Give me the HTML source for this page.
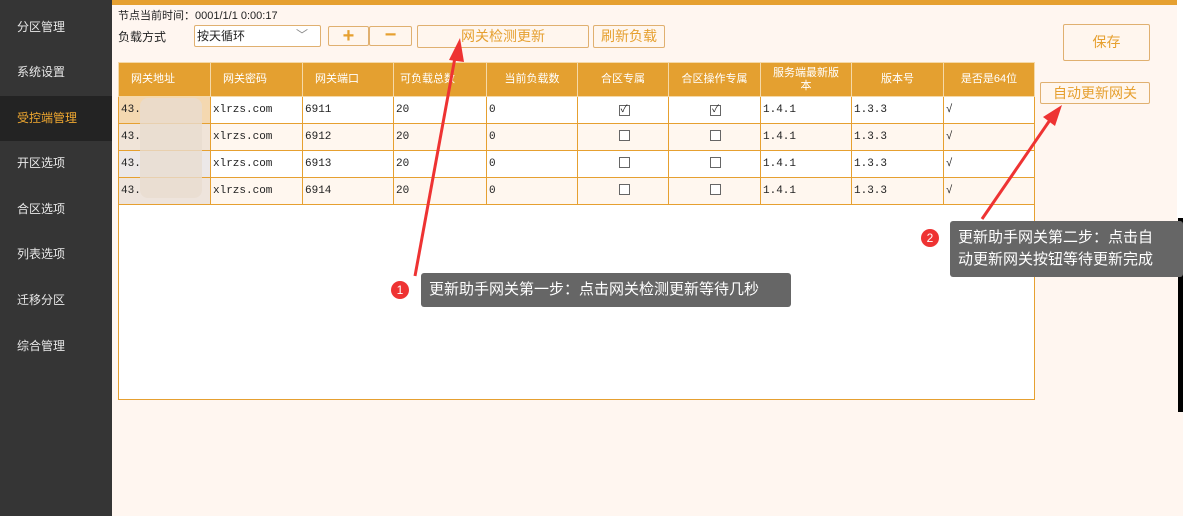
<!DOCTYPE html>
<html><head><meta charset="utf-8"><style>
*{margin:0;padding:0;box-sizing:border-box}
body{width:1183px;height:516px;overflow:hidden;background:#fff6f0;font-family:"Liberation Sans","Noto Sans CJK SC",sans-serif;font-size:12px;position:relative;color:#222}
.abs{position:absolute}
#side{left:0;top:0;width:112px;height:516px;background:#353535}
#side div{position:absolute;left:0;width:112px;height:45px;line-height:45px;padding-left:17px;color:#e8e8e8;font-size:12px}
#side .act{background:#232323;color:#f0a830}
.topbar{left:112px;top:0;width:1066px;height:5px;background:#e6a030}
.btn{position:absolute;border:1px solid #e0b070;border-radius:2px;background:#fff6ee;color:#e6a030;text-align:center}
table{position:absolute;left:118px;top:62px;border-collapse:collapse;table-layout:fixed}
th{background:#e4a030;color:#fff;font-weight:normal;font-size:11px;height:34px;border:1px solid #f5d9a8;line-height:13px}
td{height:27px;border:1px solid #e6a030;font-size:11px;padding-left:2px;font-family:"Liberation Mono","Noto Sans CJK SC",monospace;background:#fff}
tr.alt td{background:#fff7ef}
.cb{display:inline-block;width:11px;height:11px;border:1px solid #666;background:#fff;font-size:10px;line-height:9px;text-align:center}
.tip{position:absolute;background:#666;color:#fff;font-size:15px;border-radius:3px;padding:0 8px}
.badge{position:absolute;width:18px;height:18px;border-radius:50%;background:#ee3333;color:#fff;font-size:12px;text-align:center;line-height:18px}
</style></head><body>
<div id="side" class="abs">
<div style="top:5px">分区管理</div>
<div style="top:50px">系统设置</div>
<div class="act" style="top:96px">受控端管理</div>
<div style="top:141px">开区选项</div>
<div style="top:187px">合区选项</div>
<div style="top:232px">列表选项</div>
<div style="top:278px">迁移分区</div>
<div style="top:324px">综合管理</div>
</div>
<div class="abs topbar"></div>
<div class="abs" style="left:1178px;top:218px;width:5px;height:194px;background:#000"></div>
<div class="abs" style="left:1177px;top:0;width:6px;height:218px;background:#fff"></div>
<div class="abs" style="left:118px;top:7px;font-size:11px">节点当前时间：0001/1/1 0:00:17</div>
<div class="abs" style="left:118px;top:28px;font-size:12px">负载方式</div>
<div class="abs" style="left:194px;top:25px;width:127px;height:22px;border:1px solid #e0b070;border-radius:2px;background:#fff;padding-left:2px;line-height:20px">按天循环<span style="position:absolute;right:12px;top:-1px;color:#888">﹀</span></div>
<div class="btn" style="left:328px;top:26px;width:41px;height:20px;line-height:18px;font-size:20px;font-weight:bold">+</div>
<div class="btn" style="left:369px;top:26px;width:43px;height:20px;line-height:17px;font-size:20px;font-weight:bold">−</div>
<div class="btn" style="left:417px;top:25px;width:172px;height:23px;line-height:21px;font-size:14px">网关检测更新</div>
<div class="btn" style="left:593px;top:25px;width:72px;height:23px;line-height:21px;font-size:14px">刷新负载</div>
<div class="btn" style="left:1063px;top:24px;width:87px;height:37px;line-height:35px;font-size:14px">保存</div>
<div class="btn" style="left:1040px;top:82px;width:110px;height:22px;line-height:20px;font-size:14px">自动更新网关</div>
<div class="abs" style="left:118px;top:62px;width:917px;height:338px;border:1px solid #e6a030;background:#fff"></div>
<table>
<colgroup><col style="width:92px"><col style="width:92px"><col style="width:91px"><col style="width:93px"><col style="width:91px"><col style="width:91px"><col style="width:92px"><col style="width:91px"><col style="width:92px"><col style="width:91px"></colgroup>
<tr><th style="text-align:left;padding-left:12px">网关地址</th><th style="text-align:left;padding-left:12px">网关密码</th><th style="text-align:left;padding-left:12px">网关端口</th><th style="text-align:left;padding-left:6px">可负载总数</th><th>当前负载数</th><th>合区专属</th><th>合区操作专属</th><th>服务端最新版<br>本</th><th>版本号</th><th>是否是64位</th></tr>
<tr><td style="background:#f4d8b0">43.</td><td>xlrzs.com</td><td>6911</td><td>20</td><td>0</td><td style="text-align:center"><span class="cb">✓</span></td><td style="text-align:center"><span class="cb">✓</span></td><td>1.4.1</td><td>1.3.3</td><td>√</td></tr>
<tr class="alt"><td style="background:#f0e4d8">43.</td><td>xlrzs.com</td><td>6912</td><td>20</td><td>0</td><td style="text-align:center"><span class="cb"></span></td><td style="text-align:center"><span class="cb"></span></td><td>1.4.1</td><td>1.3.3</td><td>√</td></tr>
<tr><td style="background:#ece8e8">43.</td><td>xlrzs.com</td><td>6913</td><td>20</td><td>0</td><td style="text-align:center"><span class="cb"></span></td><td style="text-align:center"><span class="cb"></span></td><td>1.4.1</td><td>1.3.3</td><td>√</td></tr>
<tr class="alt"><td style="background:#eee4dc">43.</td><td>xlrzs.com</td><td>6914</td><td>20</td><td>0</td><td style="text-align:center"><span class="cb"></span></td><td style="text-align:center"><span class="cb"></span></td><td>1.4.1</td><td>1.3.3</td><td>√</td></tr>
</table>
<div class="abs" style="left:140px;top:98px;width:62px;height:100px;background:#e8dcd0;opacity:.8;border-radius:8px"></div>
<svg class="abs" style="left:0;top:0" width="1183" height="516">
<line x1="415" y1="276" x2="456" y2="52" stroke="#ee3333" stroke-width="3"/>
<polygon points="460,38 449,60 464,62" fill="#ee3333"/>
<line x1="982" y1="219" x2="1050" y2="120" stroke="#ee3333" stroke-width="3"/>
<polygon points="1062,105 1043,117 1055,126" fill="#ee3333"/>
</svg>
<div class="badge" style="left:391px;top:281px">1</div>
<div class="tip" style="left:421px;top:273px;width:370px;height:34px;line-height:34px">更新助手网关第一步：点击网关检测更新等待几秒</div>
<div class="badge" style="left:921px;top:229px">2</div>
<div class="tip" style="left:950px;top:221px;width:233px;height:56px;line-height:22px;padding-top:6px">更新助手网关第二步：点击自<br>动更新网关按钮等待更新完成</div>
</body></html>
